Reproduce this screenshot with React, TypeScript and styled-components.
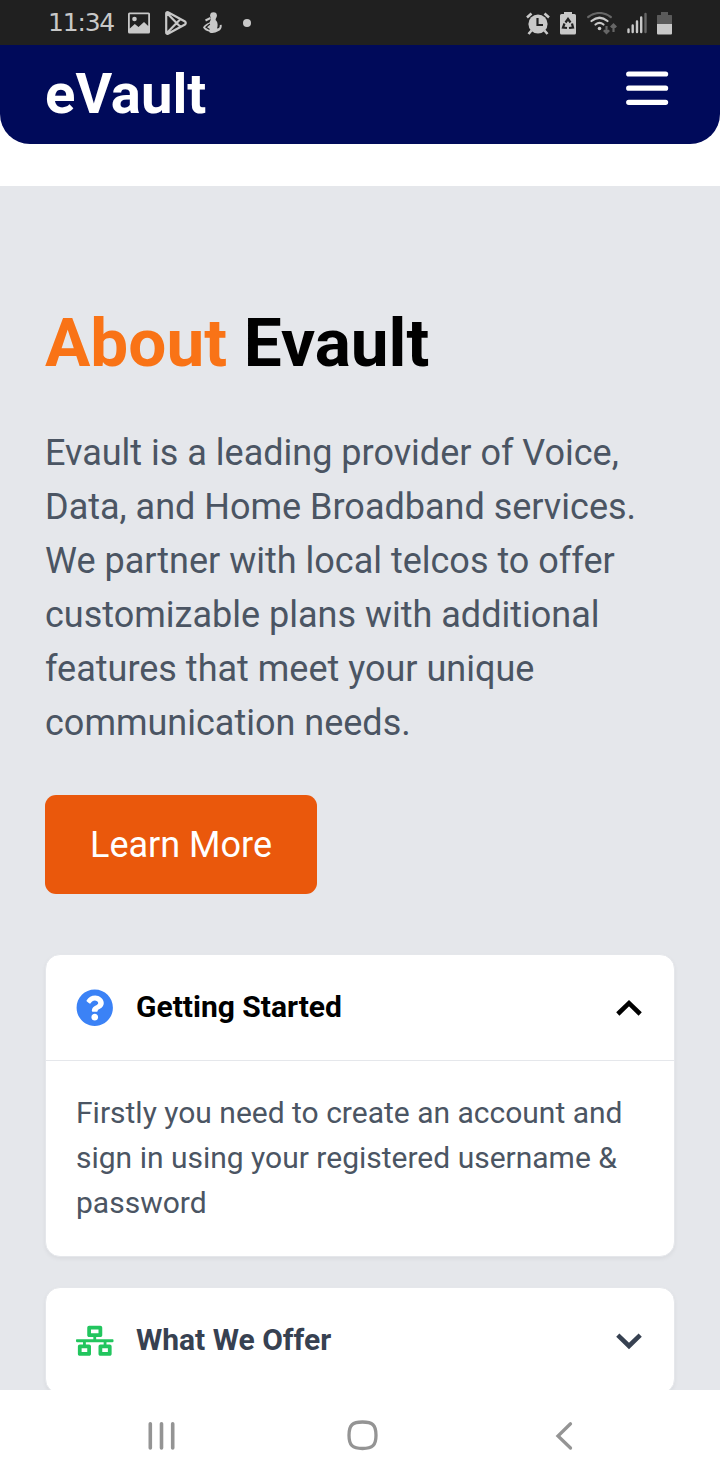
import React from 'react';
import styled, { createGlobalStyle } from 'styled-components';
import { FaQuestionCircle, FaNetworkWired } from 'react-icons/fa';

const GlobalStyle = createGlobalStyle`
  *, *::before, *::after { box-sizing: border-box; }
  body { margin: 0; background: #fff; font-family: Roboto, "Liberation Sans", sans-serif; }
  h1, p { margin: 0; }
  button { font: inherit; border: 0; background: none; padding: 0; color: inherit; }
  svg { display: block; flex: none; }
`;

const Screen = styled.div`
  width: 720px;
  height: 1480px;
  display: flex;
  flex-direction: column;
  overflow: hidden;
  background: #fff;
`;

const StatusBar = styled.header`
  flex: none;
  height: 45px;
  display: flex;
  align-items: center;
  justify-content: space-between;
  padding: 1px 48px 0;
  background: #202020;
  color: #c8c8c8;
`;

const StatusGroup = styled.div<{ $gap: number }>`
  display: flex;
  align-items: center;
  gap: ${(p) => p.$gap}px;
`;

const Clock = styled.span`
  width: 64px;
  font: 25px/44px "DejaVu Sans", sans-serif;
  letter-spacing: -1.2px;
  white-space: nowrap;
`;

const NavBar = styled.nav`
  flex: none;
  height: 99px;
  display: flex;
  justify-content: space-between;
  padding: 12px 50px 0 45px;
  background: #000a5a;
  border-radius: 0 0 30px 30px;
`;

const Brand = styled.span`
  font-size: 56.25px;
  line-height: 75px;
  font-weight: 700;
  color: #fff;
`;

const MenuButton = styled.button`
  height: 64px;
`;

const About = styled.main`
  flex: 1;
  min-height: 0;
  margin-top: 42px;
  padding: 119px 45px 0;
  background: #e5e7eb;
  overflow: hidden;
`;

const Heading = styled.h1`
  font-size: 67.5px;
  line-height: 75px;
  font-weight: 700;
  color: #000;
`;

const Accent = styled.span`
  color: #f97316;
`;

const Lead = styled.p`
  margin-top: 46px;
  font-size: 36px;
  line-height: 54px;
  color: #4b5563;
  white-space: nowrap;
`;

const LearnMore = styled.button`
  display: block;
  width: 272px;
  height: 99px;
  margin-top: 45px;
  border-radius: 11px;
  background: #ea580c;
  color: #fff;
  font-size: 36px;
`;

const Accordion = styled.section`
  display: flex;
  flex-direction: column;
  gap: 30px;
  margin-top: 60px;
`;

const Card = styled.article`
  border: 1px solid #e5e7eb;
  border-radius: 15px;
  background: #fff;
  box-shadow: 0 2px 4px rgba(0, 0, 0, 0.05);
`;

const CardHeader = styled.button<{ $color: string }>`
  width: 100%;
  height: 105px;
  display: flex;
  align-items: center;
  gap: 22.5px;
  padding: 0 30px;
  color: ${(p) => p.$color};
  font-size: 30px;
  font-weight: 700;
`;

const CardTitle = styled.span`
  flex: 1;
  padding-bottom: 2px;
  text-align: left;
`;

const CardBody = styled.p`
  padding: 29px 30px 31px;
  border-top: 1px solid #e5e7eb;
  font-size: 30px;
  line-height: 45px;
  color: #4b5563;
  white-space: nowrap;
`;

const SystemNav = styled.footer`
  flex: none;
  height: 90px;
  background: #fff;
  display: grid;
  grid-template-columns: 201px 207px 20px;
  align-items: center;
  padding: 1px 0 0 146px;
`;

const PictureIcon = () => (
  <svg width="22" height="22" viewBox="0 0 22 22">
    <path fillRule="evenodd" fill="#c8c8c8" d="M1.500 0.500h19A1.500 1.500 0 0 1 22 2v18a1.500 1.500 0 0 1-1.500 1.500h-19A1.500 1.500 0 0 1 0 20v-18A1.500 1.500 0 0 1 1.500 0.500ZM1.800 2.200V16.500L6.800 12L10.500 15L16 10L20.200 14V2.200Z" />
    <circle cx="6.500" cy="7" r="2.300" fill="#c8c8c8" />
  </svg>
);

const PlayIcon = () => (
  <svg width="22" height="24" viewBox="0 0 22 24" fill="none" stroke="#c8c8c8" strokeWidth="2.200" strokeLinejoin="round">
    <path d="M1.200 2.500Q1.200 .700 3 1.300L20 10.500Q21.500 12 20 13.500L3 22.700Q1.200 23.300 1.200 21.500ZM1.600 1.800L15.500 16M1.600 22.200L15.500 8" />
  </svg>
);

const FigureIcon = () => (
  <svg width="20" height="22" viewBox="0 0 20 22">
    <circle cx="10.500" cy="3.600" r="3.400" fill="#c8c8c8" />
    <path fill="#c8c8c8" d="M8 5.500H13Q12 8 13.500 9Q15.500 12 14 16.500Q17 16.500 16.800 13L18.700 12.800Q19.300 18 14.500 19.500Q12 21.500 7 20.800L6 19.500Q2 19 0 15.500Q1.500 12.500 6.500 10.500Q8 8 8 5.500Z" />
    <path fill="none" stroke="#c8c8c8" strokeWidth="2" d="M2.500 8.500L7.500 6" />
    <path fill="none" stroke="#202020" strokeWidth="1.200" d="M6.800 12L3 15.200L6.500 17.500" />
  </svg>
);

const AlarmIcon = () => (
  <svg width="24" height="23" viewBox="0 0 24 23" fill="none" stroke="#c8c8c8" strokeWidth="2.600">
    <circle cx="12" cy="12" r="9.600" fill="#c8c8c8" stroke="none" />
    <path d="M1 5.500L5.500 1.500M18.500 1.500L23 5.500M5.500 18.500L2.500 22M18.500 18.500L21.500 22" />
    <path stroke="#202020" strokeWidth="2.200" d="M11.500 6V13H17" />
  </svg>
);

const RecycleBatteryIcon = () => (
  <svg width="16" height="23" viewBox="0 0 16 23">
    <path fill="#c8c8c8" d="M4 0h8v2h2.500a1.500 1.500 0 0 1 1.500 1.500v17.500a1.500 1.500 0 0 1-1.500 1.500h-13a1.500 1.500 0 0 1-1.500-1.500V3.500A1.500 1.500 0 0 1 1.500 2H4Z" />
    <path fill="none" stroke="#202020" strokeWidth="2.200" d="M5.500 10.500L8 7L10.500 10.500M12 11.500L13 15.500L9 16M7 16L3 15.500L4.500 11.500" />
  </svg>
);

const WifiIcon = () => (
  <svg width="30" height="23" viewBox="0 0 30 23" fill="none" strokeWidth="2.200" strokeLinecap="round">
    <path stroke="#666" d="M1.200 5Q12.500-3 23.800 5" />
    <path stroke="#c8c8c8" d="M4.500 9Q12.500 2.500 20.500 9M8.500 12.500Q12.500 9.300 16.500 12.500" />
    <circle cx="12.500" cy="16.500" r="1.800" fill="#c8c8c8" />
    <path stroke="#666" strokeLinecap="butt" d="M19.500 14V21M16.800 18.300L19.500 21L22.200 18.300M26.500 20V13M23.800 15.300L26.500 12.600L29.200 15.300" />
  </svg>
);

const SignalIcon = () => (
  <svg width="20" height="22" viewBox="0 0 20 22" fill="none" strokeWidth="2.400" strokeLinecap="round">
    <path stroke="#c8c8c8" d="M1.500 17.500V20M5.700 13.500V20M10 9.500V20M14.200 5.500V20" />
    <path stroke="#666" d="M18.500 2V20" />
  </svg>
);

const BatteryIcon = () => (
  <svg width="15" height="23" viewBox="0 0 15 23">
    <path fill="#5a5a5a" d="M4 0h7v3h3.500l.500.500V12H0V3.500L.500 3H4Z" />
    <path fill="#c8c8c8" d="M0 12H15V21.500Q15 22.500 14 22.500H1Q0 22.500 0 21.500Z" />
  </svg>
);

const MoreDot = () => (
  <svg width="30" height="8">
    <circle cx="9" cy="4" r="4" fill="#c8c8c8" />
  </svg>
);

const MenuIcon = () => (
  <svg width="45" height="64" viewBox="0 0 45 64" fill="none" stroke="#fff" strokeWidth="5.200" strokeLinecap="round">
    <path d="M3.700 17H40.600M3.700 31.200H40.600M3.700 45.300H40.600" />
  </svg>
);

const Chevron = ({ up = false }: { up?: boolean }) => (
  <svg width="30" height="30" viewBox="0 0 30 30" fill="none" stroke="currentColor" strokeWidth="4.600">
    <path d={up ? 'M3.800 21L15 10.200L26.200 21' : 'M3.800 9.200L15 20L26.200 9.200'} />
  </svg>
);

export default function App() {
  return (
    <>
      <GlobalStyle />
      <Screen>
        <StatusBar>
          <StatusGroup $gap={15.5}>
            <Clock>11:34</Clock>
            <PictureIcon />
            <PlayIcon />
            <FigureIcon />
            <MoreDot />
          </StatusGroup>
          <StatusGroup $gap={10}>
            <AlarmIcon />
            <StatusGroup $gap={11}>
              <RecycleBatteryIcon />
              <WifiIcon />
            </StatusGroup>
            <StatusGroup $gap={10}>
              <SignalIcon />
              <BatteryIcon />
            </StatusGroup>
          </StatusGroup>
        </StatusBar>
        <NavBar>
          <Brand>eVault</Brand>
          <MenuButton aria-label="Menu"><MenuIcon /></MenuButton>
        </NavBar>
        <About>
          <Heading><Accent>About</Accent> Evault</Heading>
          <Lead>
            Evault is a leading provider of Voice,<br />
            Data, and Home Broadband services.<br />
            We partner with local telcos to offer<br />
            customizable plans with additional<br />
            features that meet your unique<br />
            communication needs.
          </Lead>
          <LearnMore>Learn More</LearnMore>
          <Accordion>
            <Card>
              <CardHeader $color="#000">
                <FaQuestionCircle size={37.5} color="#3b82f6" />
                <CardTitle>Getting Started</CardTitle>
                <Chevron up />
              </CardHeader>
              <CardBody>
                Firstly you need to create an account and<br />
                sign in using your registered username &amp;<br />
                password
              </CardBody>
            </Card>
            <Card>
              <CardHeader $color="#374151">
                <FaNetworkWired size={37.5} color="#22c55e" />
                <CardTitle>What We Offer</CardTitle>
                <Chevron />
              </CardHeader>
            </Card>
          </Accordion>
        </About>
        <SystemNav>
          <svg width="31" height="30" viewBox="0 0 31 30" fill="none" stroke="#949494" strokeWidth="3.600" strokeLinecap="round">
            <path d="M4.300 2.800V27M15.500 2.800V27M26.700 2.800V27" />
          </svg>
          <svg width="31" height="31" viewBox="0 0 31 31" fill="none" stroke="#949494" strokeWidth="3.300">
            <path d="M15.500 2C25.500 2 29 5 29 15.200S25.500 28.500 15.500 28.500S2 25.400 2 15.200S5.500 2 15.500 2Z" />
          </svg>
          <svg width="20" height="30" viewBox="0 0 20 30" fill="none" stroke="#949494" strokeWidth="3.300" strokeLinecap="round">
            <path d="M16.500 2.800L4 15L16.500 27" />
          </svg>
        </SystemNav>
      </Screen>
    </>
  );
}
